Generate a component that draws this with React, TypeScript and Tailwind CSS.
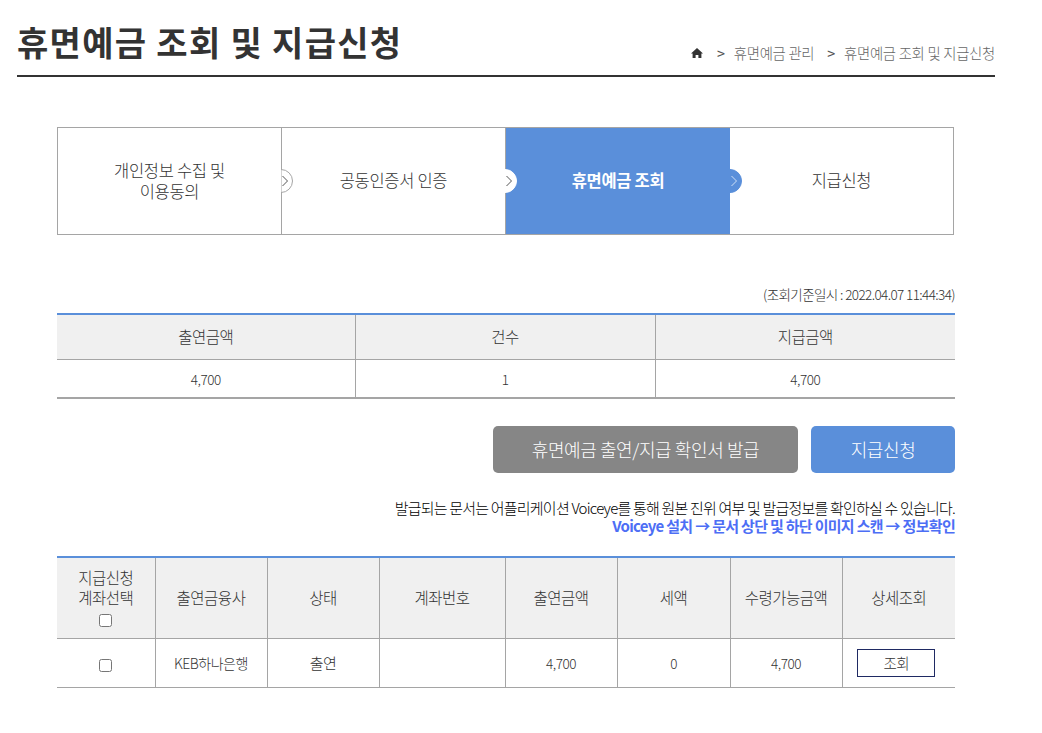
import React from "react";

const font = { fontFamily: '"Noto Sans CJK KR", "Noto Sans", sans-serif' };

function Knob({ variant }: { variant: "white" | "whiteFull" | "blue" }) {
  const fill = variant === "blue" ? "#5a8fda" : "#ffffff";
  const ring = variant === "white" ? "#a5a5a5" : fill;
  const chev = variant === "blue" ? "#cfe0f6" : "#555555";
  return (
    <svg width="12" height="24" viewBox="0 0 12 24" className="absolute right-[-12px] top-[41px] z-10">
      <path d="M0 .5A11.5 11.5 0 0 1 0 23.5Z" fill={fill} stroke={ring} strokeWidth="1" />
      <path d="M1.5 7 L6.5 12 L1.5 17" fill="none" stroke={chev} strokeWidth="1" />
    </svg>
  );
}

function Step({ children, active, knob, last }: { children: React.ReactNode; active?: boolean; knob?: "white" | "whiteFull" | "blue"; last?: boolean }) {
  return (
    <div
      className={
        "relative flex h-full items-center justify-center pb-[1px] text-center text-[16.5px] leading-[21px] tracking-[-0.3px] " +
        (active ? "w-[224px] bg-[#5a8fda] font-bold text-white" : "font-light text-[#333333] ") +
        (!active && !last ? " w-[224px] border-r border-[#a5a5a5]" : "") +
        (last ? " flex-1" : "")
      }
    >
      <div>{children}</div>
      {knob && <Knob variant={knob} />}
    </div>
  );
}

const th = "border-l border-[#a5a5a5] bg-[#f0f0f0] p-0 pb-[2px] text-center text-[15.5px] font-light leading-[20px] text-[#333333] first:border-l-0";
const td = "border-l border-[#a5a5a5] p-0 pt-[2px] text-center text-[13.5px] font-light text-[#333333] first:border-l-0";

export default function App() {
  return (
    <div className="min-h-[733px] w-[1042px] bg-white pl-[17px] tracking-[-0.5px]" style={font}>
      <div className="flex h-[77px] w-[978px] items-end justify-between border-b-2 border-[#333333]">
        <h1 className="mb-[9px] text-[34px] font-bold leading-[48px] tracking-[1.3px] text-[#333333]">휴면예금 조회 및 지급신청</h1>
        <div className="mb-[12px] flex items-center text-[14.4px] font-light leading-[20px] tracking-[-0.3px] text-[#666666]">
          <svg width="12" height="12" viewBox="0 0 12 12" className="mr-[14px]">
            <path d="M6 1 L12 6.5 L10.4 6.5 L10.4 11 L7.4 11 L7.4 8 L4.6 8 L4.6 11 L1.6 11 L1.6 6.5 L0 6.5 Z" fill="#333333" />
          </svg>
          <span className="mr-[9px] font-normal text-[#555555]">&gt;</span>
          <span className="mr-[13px]">휴면예금 관리</span>
          <span className="mr-[9px] font-normal text-[#555555]">&gt;</span>
          <span>휴면예금 조회 및 지급신청</span>
        </div>
      </div>

      <div className="ml-[40px] w-[898px]">
        <div className="mt-[50px] flex h-[108px] w-[897px] border border-[#a5a5a5]">
          <Step knob="white"><div>개인정보 수집 및</div><div>이용동의</div></Step>
          <Step knob="whiteFull">공동인증서 인증</Step>
          <Step active knob="blue">휴면예금 조회</Step>
          <Step last>지급신청</Step>
        </div>

        <p className="mt-[50px] text-right text-[13.5px] font-light leading-[18px] tracking-[-0.6px] text-[#333333]">(조회기준일시 : 2022.04.07 11:44:34)</p>

        <table className="mt-[10px] w-full table-fixed border-collapse border-t-2 border-b-2 border-t-[#5a8fda] border-b-[#a5a5a5]">
          <colgroup>
            <col className="w-[298px]" />
            <col className="w-[300px]" />
            <col className="w-[300px]" />
          </colgroup>
          <thead>
            <tr className="h-[45px] border-b border-[#a5a5a5]">
              <th className={th}>출연금액</th>
              <th className={th}>건수</th>
              <th className={th}>지급금액</th>
            </tr>
          </thead>
          <tbody>
            <tr className="h-[39px]">
              <td className={td}>4,700</td>
              <td className={td}>1</td>
              <td className={td}>4,700</td>
            </tr>
          </tbody>
        </table>

        <div className="mt-[27px] flex justify-end gap-[13px]">
          <button className="h-[47px] w-[305px] rounded-[5px] bg-[#868686] text-[18px] font-light tracking-[-0.4px] text-white">휴면예금 출연/지급 확인서 발급</button>
          <button className="h-[47px] w-[144px] rounded-[5px] bg-[#5a8fda] text-[18px] font-light tracking-[-0.4px] text-white">지급신청</button>
        </div>

        <div className="mt-[26px] text-right text-[15px] leading-[18px]">
          <p className="font-light tracking-[-0.8px] text-black">발급되는 문서는 어플리케이션 Voiceye를 통해 원본 진위 여부 및 발급정보를 확인하실 수 있습니다.</p>
          <p className="font-bold tracking-[-0.7px] text-[#4d6ef5]">Voiceye 설치 → 문서 상단 및 하단 이미지 스캔 → 정보확인</p>
        </div>

        <table className="mt-[21px] w-full table-fixed border-collapse border-t-2 border-b border-t-[#5a8fda] border-b-[#a5a5a5]">
          <colgroup>
            <col className="w-[98px]" />
            <col className="w-[112px]" />
            <col className="w-[112px]" />
            <col className="w-[126px]" />
            <col className="w-[112px]" />
            <col className="w-[113px]" />
            <col className="w-[112px]" />
            <col className="w-[113px]" />
          </colgroup>
          <thead>
            <tr className="h-[81px] border-b border-[#a5a5a5]">
              <th className={th}>
                <div>지급신청</div>
                <div>계좌선택</div>
                <input type="checkbox" className="mx-auto mt-[7px] block h-[13px] w-[13px]" style={{ appearance: "auto" }} />
              </th>
              <th className={th}>출연금융사</th>
              <th className={th}>상태</th>
              <th className={th}>계좌번호</th>
              <th className={th}>출연금액</th>
              <th className={th}>세액</th>
              <th className={th}>수령가능금액</th>
              <th className={th}>상세조회</th>
            </tr>
          </thead>
          <tbody>
            <tr className="h-[49px]">
              <td className={td + " !pt-[5px]"}>
                <input type="checkbox" className="mx-auto block h-[13px] w-[13px]" style={{ appearance: "auto" }} />
              </td>
              <td className={td + " !text-[14px]"}>KEB하나은행</td>
              <td className={td + " !text-[15px]"}>출연</td>
              <td className={td}></td>
              <td className={td}>4,700</td>
              <td className={td}>0</td>
              <td className={td}>4,700</td>
              <td className={td + " !pt-0"}>
                <button className="mr-[5px] h-[28px] w-[78px] border border-[#1f2a63] text-[14.5px] font-light text-[#333333]">조회</button>
              </td>
            </tr>
          </tbody>
        </table>
      </div>
    </div>
  );
}
